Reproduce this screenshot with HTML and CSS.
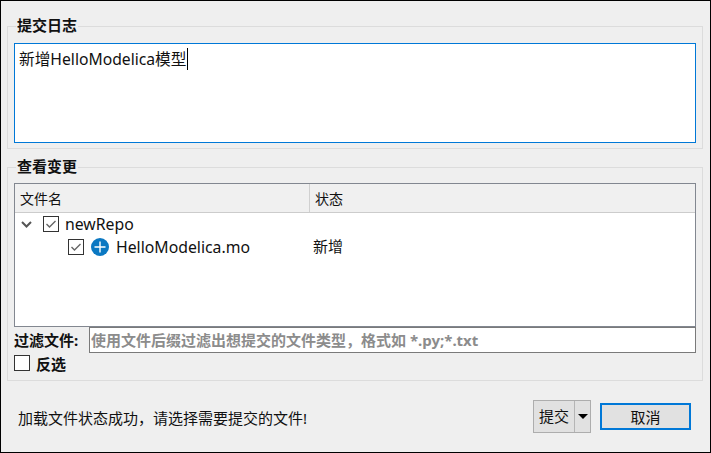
FILE: index.html
```html
<!DOCTYPE html>
<html lang="zh-CN">
<head>
  <meta charset="UTF-8" />
  <meta name="viewport" content="width=device-width, initial-scale=1" />
  <title>提交</title>
  <link rel="stylesheet" href="styles.css">
</head>
<body>
  <div class="dialog">
    <fieldset class="group group-log">
      <legend>提交日志</legend>
      <div class="log-box"><span class="caret">新增HelloModelica模型</span></div>
    </fieldset>

    <fieldset class="group group-changes">
      <legend>查看变更</legend>
      <div class="tree">
        <div class="tree-head">
          <div class="col-name">文件名</div>
          <div class="col-state">状态</div>
        </div>
        <div class="tree-row row-repo">
          <svg class="chevron" width="11" height="7" viewBox="0 0 11 7"><path d="M1 1l4.5 4.5L10 1" fill="none" stroke="#555" stroke-width="2"/></svg>
          <svg class="check" width="16" height="16" viewBox="0 0 16 16"><rect x="0.5" y="0.5" width="15" height="15" fill="#fff" stroke="#333"/><path d="M3.5 8l3 3 6-6" fill="none" stroke="#666" stroke-width="1.4"/></svg>
          <span class="row-text">newRepo</span>
        </div>
        <div class="tree-row row-file">
          <svg class="check" width="16" height="16" viewBox="0 0 16 16"><rect x="0.5" y="0.5" width="15" height="15" fill="#fff" stroke="#333"/><path d="M3.5 8l3 3 6-6" fill="none" stroke="#666" stroke-width="1.4"/></svg>
          <svg class="add-icon" width="18" height="18" viewBox="0 0 18 18"><circle cx="9" cy="9" r="9" fill="#0b78c2"/><path d="M9 3.5v11M3.5 9h11" stroke="#fff" stroke-width="1.4"/></svg>
          <span class="file-name row-text">HelloModelica.mo</span>
          <span class="file-state">新增</span>
        </div>
      </div>
      <div class="filter-row">
        <label for="filter-input">过滤文件:</label>
        <input type="text" id="filter-input" placeholder="使用文件后缀过滤出想提交的文件类型，格式如 *.py;*.txt" />
      </div>
      <div class="invert-row">
        <span class="box"></span>
        <span>反选</span>
      </div>
    </fieldset>

    <div class="footer">
      <div class="status">加载文件状态成功，请选择需要提交的文件!</div>
      <div class="split-btn">
        <span class="split-main">提交</span>
        <span class="split-arrow"></span>
      </div>
      <button class="cancel-btn">取消</button>
    </div>
  </div>
</body>
</html>
```

FILE: styles.css
```css
* {
  box-sizing: border-box;
}
html, body {
  margin: 0;
  padding: 0;
}
body {
  width: 711px;
  height: 453px;
  overflow: hidden;
  font-family: "Noto Sans", "Noto Sans CJK SC", sans-serif;
  font-size: 15px;
  color: #111;
}
.dialog {
  width: 711px;
  height: 453px;
  background: #efefef;
  border: 1px solid #000;
  padding: 15px 7px 0 6px;
}
.group {
  margin: 0;
  padding: 0 6px;
  border: 1px solid #dcdcdc;
  min-width: 0;
}
.group legend {
  margin-left: 2px;
  padding: 0 1px 2px;
  font-size: 15px;
  font-weight: bold;
  line-height: 18px;
}
.group-log {
  height: 133px;
}
.group-changes {
  height: 224px;
  margin-top: 8px;
}
.log-box {
  height: 100px;
  margin-top: 7px;
  background: #fff;
  border: 1px solid #0078d7;
  padding: 4px 4px;
  font-size: 15.7px;
  line-height: 22px;
}
.caret {
  display: inline-block;
  border-right: 1px solid #000;
  padding-right: 1px;
}
.tree {
  height: 144px;
  margin-top: 6px;
  background: #fff;
  border: 1px solid #828790;
}
.tree-head {
  display: flex;
  height: 29px;
  background: #f0f0f0;
  border-bottom: 1px solid #ccc;
  line-height: 30px;
  font-size: 14px;
}
.col-name {
  width: 295px;
  padding-left: 5px;
  border-right: 1px solid #d0d0d0;
}
.col-state {
  padding-left: 5px;
}
.tree-row {
  display: flex;
  align-items: center;
  height: 22px;
}
.row-text {
  font-size: 15.8px;
}
.row-repo {
  padding-left: 6px;
}
.row-repo .check {
  margin-left: 11px;
  margin-right: 6px;
}
.row-file {
  padding-left: 53px;
  margin-top: 1px;
}
.add-icon {
  margin-left: 7px;
  margin-right: 7px;
}
.file-name {
  width: 197px;
}
.file-state {
  padding-bottom: 3px;
}
.filter-row {
  display: flex;
  align-items: center;
  height: 26px;
}
.filter-row label {
  width: 75px;
  padding-bottom: 2px;
  font-size: 15px;
  font-weight: bold;
  white-space: nowrap;
}
.filter-row input {
  flex: 1;
  height: 26px;
  margin: 0;
  padding: 0 1px;
  background: #fff;
  border: 1px solid #7a7a7a;
  border-radius: 0;
  font-family: inherit;
  font-size: 15px;
  font-weight: bold;
  outline: none;
}
.filter-row input::placeholder {
  color: #8c8c8c;
  opacity: 1;
}
.invert-row {
  display: flex;
  align-items: center;
  gap: 6px;
  height: 20px;
  font-size: 15px;
  font-weight: bold;
}
.box {
  width: 16px;
  height: 16px;
  background: #fff;
  border: 1px solid #333;
}
.footer {
  display: flex;
  align-items: center;
  height: 70px;
  padding-left: 11px;
  padding-right: 12px;
}
.status {
  flex: 1;
  padding-top: 2px;
  font-size: 15px;
}
.split-btn {
  display: flex;
  align-items: center;
  width: 58px;
  height: 33px;
  background: #e1e1e1;
  border: 1px solid #adadad;
}
.split-main {
  width: 41px;
  height: 31px;
  line-height: 31px;
  text-align: center;
  border-right: 1px solid #b5b5b5;
}
.split-arrow {
  width: 0;
  height: 0;
  margin-left: 3px;
  border-left: 5px solid transparent;
  border-right: 5px solid transparent;
  border-top: 5px solid #000;
}
.cancel-btn {
  width: 91px;
  height: 27px;
  margin-left: 9px;
  padding: 0;
  background: #e1e1e1;
  border: 2px solid #0078d7;
  font-family: inherit;
  font-size: 15px;
  color: #111;
}
```
